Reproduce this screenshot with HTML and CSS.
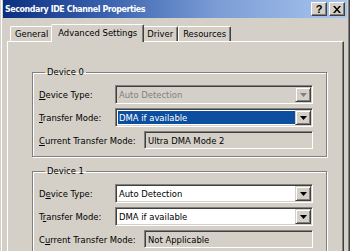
FILE: index.html
```html
<!DOCTYPE html>
<html lang="en">
<head>
  <meta charset="UTF-8" />
  <title>Secondary IDE Channel Properties</title>
  <link rel="stylesheet" href="styles.css">
</head>
<body>
  <div class="window">
    <!-- Title bar -->
    <div class="titlebar">
      <span class="title">Secondary IDE Channel Properties</span>
      <div class="caption-btns">
        <span class="cap-btn help">?</span>
        <span class="cap-btn">
          <svg width="8" height="7" viewBox="0 0 8 7"><path d="M0 0h2l2 2.5L6 0h2L5 3.5 8 7H6L4 4.5 2 7H0l3-3.5z" fill="#000"/></svg>
        </span>
      </div>
    </div>

    <div class="client">
      <!-- Tabs -->
      <div class="tabs">
        <div class="tab">General</div>
        <div class="tab active">Advanced Settings</div>
        <div class="tab">Driver</div>
        <div class="tab">Resources</div>
      </div>

      <div class="page">
        <fieldset class="group">
          <legend>Device 0</legend>
          <div class="rows">
            <label><u>D</u>evice Type:</label>
            <div class="combo disabled">
              <span class="value">Auto Detection</span>
              <span class="drop"><svg width="7" height="4" viewBox="0 0 7 4"><path d="M0 0h7L3.5 4z"/></svg></span>
            </div>

            <label><u>T</u>ransfer Mode:</label>
            <div class="combo focused">
              <span class="value">DMA if available</span>
              <span class="drop"><svg width="7" height="4" viewBox="0 0 7 4"><path d="M0 0h7L3.5 4z"/></svg></span>
            </div>

            <label><u>C</u>urrent Transfer Mode:</label>
            <div class="readonly">Ultra DMA Mode 2</div>
          </div>
        </fieldset>

        <fieldset class="group">
          <legend>Device 1</legend>
          <div class="rows">
            <label>D<u>e</u>vice Type:</label>
            <div class="combo">
              <span class="value">Auto Detection</span>
              <span class="drop"><svg width="7" height="4" viewBox="0 0 7 4"><path d="M0 0h7L3.5 4z"/></svg></span>
            </div>

            <label>T<u>r</u>ansfer Mode:</label>
            <div class="combo">
              <span class="value">DMA if available</span>
              <span class="drop"><svg width="7" height="4" viewBox="0 0 7 4"><path d="M0 0h7L3.5 4z"/></svg></span>
            </div>

            <label>C<u>u</u>rrent Transfer Mode:</label>
            <div class="readonly">Not Applicable</div>
          </div>
        </fieldset>
      </div>
    </div>
  </div>
</body>
</html>
```

FILE: styles.css
```css
:root {
  --face: #d4d0c8;
  --shadow: #808080;
  --dark: #404040;
  --light: #ffffff;
  --select: #0c4ea0;
}

* {
  box-sizing: border-box;
}

body {
  margin: 0;
  background: var(--face);
  font-family: 'DejaVu Sans Condensed', 'Liberation Sans', sans-serif;
  font-size: 9.4px;
  color: #000;
}

.window {
  width: 350px;
  height: 251px;
  overflow: hidden;
  padding: 0 3px;
  background: var(--face);
  box-shadow: inset 1px 0 var(--face), inset 2px 0 var(--light), inset -1px 0 var(--dark), inset -2px 0 var(--shadow);
}

/* title bar */
.titlebar {
  height: 18px;
  display: flex;
  align-items: center;
  justify-content: space-between;
  padding: 0 2px 0 2px;
  background: linear-gradient(to right, #0a2f80 0%, #3a62ae 30%, #7b9cd5 62%, #a9c6ee 100%);
}

.title {
  color: #fff;
  font-weight: bold;
  font-size: 8.8px;
  letter-spacing: -0.4px;
}

.caption-btns {
  display: flex;
  gap: 2px;
}

.cap-btn {
  width: 16px;
  height: 14px;
  display: flex;
  align-items: center;
  justify-content: center;
  background: var(--face);
  border: 1px solid;
  border-color: var(--light) var(--dark) var(--dark) var(--light);
  box-shadow: inset -1px -1px var(--shadow);
  font-weight: bold;
  font-size: 11px;
  font-family: 'Liberation Sans', sans-serif;
}

/* tabs */
.client {
  padding: 6px 3px 0 4px;
}

.tabs {
  display: flex;
  align-items: flex-end;
  height: 17px;
  padding-left: 3px;
}

.tab {
  height: 15px;
  padding: 0 4px;
  line-height: 14px;
  border: 1px solid;
  border-bottom: none;
  border-color: var(--light) var(--dark) transparent var(--light);
  border-radius: 2px 2px 0 0;
  box-shadow: inset -1px 0 var(--shadow);
}

.tab.active {
  position: relative;
  z-index: 1;
  height: 18px;
  margin: 0 -2px -1px;
  padding: 0 6px;
  line-height: 16px;
  background: var(--face);
}

.page {
  height: 220px;
  border: 1px solid;
  border-color: var(--light) var(--dark) var(--dark) var(--light);
  box-shadow: inset -1px -1px var(--shadow);
  padding: 24px 16px 0 24px;
}

/* group boxes */
.group {
  margin: 0 0 8px;
  padding: 7px 10px 7px 6px;
  border: 1px solid var(--shadow);
  box-shadow: inset 1px 1px var(--light), 1px 1px var(--light);
  min-width: 0;
}

.group legend {
  margin-left: 6px;
  padding: 0 2px;
  line-height: 12px;
}

.rows {
  display: grid;
  grid-template-columns: 76px 198px;
  row-gap: 4px;
  align-items: center;
}

label {
  white-space: nowrap;
}

label u {
  text-decoration: underline;
}

.combo,
.readonly {
  height: 19px;
  display: flex;
  align-items: center;
  border: 1px solid;
  border-color: var(--shadow) var(--light) var(--light) var(--shadow);
  box-shadow: inset 1px 1px var(--dark), inset -1px -1px var(--face);
  padding: 2px;
  background: #fff;
}

.readonly {
  height: 18px;
  margin-left: 29px;
  background: var(--face);
  padding-left: 3px;
}

.combo .value {
  flex: 1;
  height: 13px;
  line-height: 13px;
  padding-left: 1px;
  white-space: nowrap;
  overflow: hidden;
}

.combo.focused .value {
  background: var(--select);
  color: #fff;
}

.combo.disabled {
  background: var(--face);
  color: var(--shadow);
}

.drop {
  width: 16px;
  height: 15px;
  margin-right: -1px;
  display: flex;
  align-items: center;
  justify-content: center;
  background: var(--face);
  border: 1px solid;
  border-color: var(--face) var(--dark) var(--dark) var(--face);
  box-shadow: inset 1px 1px var(--light), inset -1px -1px var(--shadow);
}

.drop svg {
  fill: #000;
}

.combo.disabled .drop svg {
  fill: var(--shadow);
}
```
